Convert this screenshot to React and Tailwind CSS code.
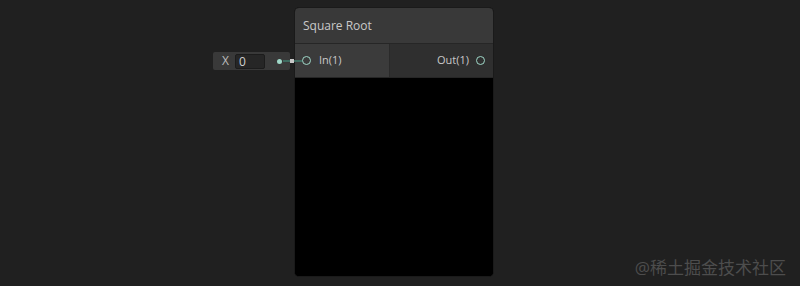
import React from 'react';

const font = { fontFamily: '"Open Sans", "Noto Sans", "Noto Sans CJK SC", sans-serif' };

function Port({ className = '' }) {
  return <span className={`block w-[9px] h-[9px] rounded-full border-[1.5px] border-[#9fd8c8] ${className}`} />;
}

export default function App() {
  return (
    <div className="w-[800px] h-[286px] bg-[#202020] overflow-hidden flex" style={font}>
      {/* inline input for In(1) */}
      <div className="w-[213px] shrink-0" />
      <div className="pt-[52px] flex items-start">
        <div className="relative flex items-center h-[18px] w-[77px] bg-[#393939] rounded-[2px] pl-[9px] pr-[8px]">
          <span className="text-[12px] text-[#bdbdbd] w-[13px] leading-none">X</span>
          <span className="h-[15px] w-[30px] bg-[#262626] border border-[#1c1c1c] rounded-[2px] text-[12px] leading-[13px] text-[#d0d0d0] pl-[3px]">0</span>
          <span className="flex-1" />
          <span className="w-[5px] h-[5px] rounded-full bg-[#9fd8c8]" />
          {/* edge to port */}
          <span className="absolute left-[70px] top-[8px] w-[19px] h-[2px] bg-[#3f6b60] z-10" />
          <span className="absolute left-[77px] top-[7px] w-[4px] h-[4px] bg-[#c8c8c8] z-10" />
        </div>
      </div>

      {/* node */}
      <div className="mt-[7px] ml-[4px] w-[200px] h-[270px] flex flex-col rounded-[5px] overflow-hidden bg-black border border-[#1a1a1a]">
        <div className="h-[36px] shrink-0 bg-[#393939] border-b border-[#262626] flex items-center pl-[8px] text-[12px] text-[#c9c9c9]">
          Square Root
        </div>
        <div className="h-[34px] shrink-0 flex border-b border-[#262626]">
          <div className="w-[95px] bg-[#3b3b3b] border-r border-[#2a2a2a] flex items-center pl-[7px] gap-[8px] text-[11px] text-[#c9c9c9]">
            <Port />
            <span>In(1)</span>
          </div>
          <div className="flex-1 bg-[#2f2f2f] flex items-center justify-end pr-[8px] gap-[7px] text-[11px] text-[#c9c9c9]">
            <span>Out(1)</span>
            <Port />
          </div>
        </div>
        <div className="flex-1 bg-black" />
      </div>

      {/* watermark */}
      <div className="flex-1 flex items-end justify-end pr-[14px] pb-[10px]">
        <span className="text-[17px] text-[#4d4d4d] leading-none">@稀土掘金技术社区</span>
      </div>
    </div>
  );
}
